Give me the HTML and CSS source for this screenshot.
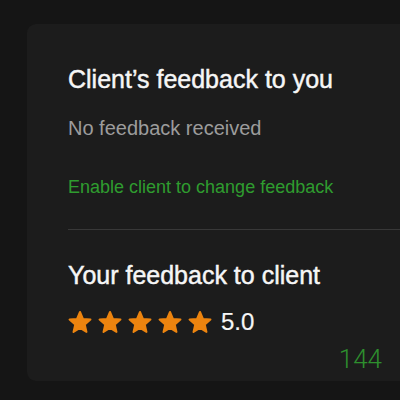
FILE: index.html
```html
<!DOCTYPE html>
<html lang="en">
<head>
<meta charset="utf-8">
<link rel="stylesheet" href="styles.css">
</head>
<body>
<div class="card">
  <h2 class="title">Client’s feedback to you</h2>
  <p class="muted">No feedback received</p>
  <a class="link" href="#">Enable client to change feedback</a>
  <hr class="divider">
  <h2 class="title second">Your feedback to client</h2>
  <div class="rating">
    <div class="stars">
      <svg class="star" viewBox="0 0 24 24"><path d="M12 2L14.94 8.96 22.46 9.6 16.76 14.55 18.47 21.9 12 18 5.53 21.9 7.24 14.55 1.54 9.6 9.06 8.96Z"/></svg>
      <svg class="star" viewBox="0 0 24 24"><path d="M12 2L14.94 8.96 22.46 9.6 16.76 14.55 18.47 21.9 12 18 5.53 21.9 7.24 14.55 1.54 9.6 9.06 8.96Z"/></svg>
      <svg class="star" viewBox="0 0 24 24"><path d="M12 2L14.94 8.96 22.46 9.6 16.76 14.55 18.47 21.9 12 18 5.53 21.9 7.24 14.55 1.54 9.6 9.06 8.96Z"/></svg>
      <svg class="star" viewBox="0 0 24 24"><path d="M12 2L14.94 8.96 22.46 9.6 16.76 14.55 18.47 21.9 12 18 5.53 21.9 7.24 14.55 1.54 9.6 9.06 8.96Z"/></svg>
      <svg class="star" viewBox="0 0 24 24"><path d="M12 2L14.94 8.96 22.46 9.6 16.76 14.55 18.47 21.9 12 18 5.53 21.9 7.24 14.55 1.54 9.6 9.06 8.96Z"/></svg>
    </div>
    <span class="score">5.0</span>
  </div>
  <div class="count">144</div>
</div>
</body>
</html>
```
FILE: styles.css
```css
html, body {
  margin: 0;
  padding: 0;
  background: #151515;
  font-family: "Liberation Sans", Arial, sans-serif;
  overflow: hidden;
}

.card {
  margin: 24px 0 0 27px;
  width: calc(100% - 27px);
  height: 357px;
  box-sizing: border-box;
  padding: 40px 0 0 41px;
  background: #1c1c1c;
  border-radius: 9px 0 0 9px;
  display: flex;
  flex-direction: column;
  align-items: flex-start;
}

.title {
  margin: 0;
  color: #f6f6f6;
  font-size: 25px;
  font-weight: 400;
  line-height: 30px;
  -webkit-text-stroke: 0.45px #f6f6f6;
}

.muted {
  margin: 22px 0 0;
  color: #9c9c9c;
  font-size: 20px;
  line-height: 24px;
}

.link {
  margin-top: 36px;
  color: #2f9c2f;
  font-size: 18px;
  line-height: 22px;
  text-decoration: none;
}

.divider {
  align-self: stretch;
  margin: 31px 0 0;
  border: 0;
  height: 1px;
  background: #383838;
}

.second {
  margin-top: 30px;
}

.rating {
  margin-top: 18px;
  display: flex;
  align-items: center;
  gap: 9px;
}

.stars {
  display: flex;
  gap: 6px;
}

.star {
  width: 24px;
  height: 24px;
  fill: #ec840f;
  stroke: #ec840f;
  stroke-width: 2;
  stroke-linejoin: round;
}

.score {
  color: #f6f6f6;
  font-size: 24px;
  line-height: 28px;
  -webkit-text-stroke: 0.2px #f6f6f6;
}

.count {
  align-self: stretch;
  margin-top: 8px;
  padding-right: 18px;
  text-align: right;
  color: #2e8f2e;
  font-family: Roboto, "Liberation Sans", sans-serif;
  font-size: 26px;
  font-weight: 300;
  line-height: 30px;
}
```
